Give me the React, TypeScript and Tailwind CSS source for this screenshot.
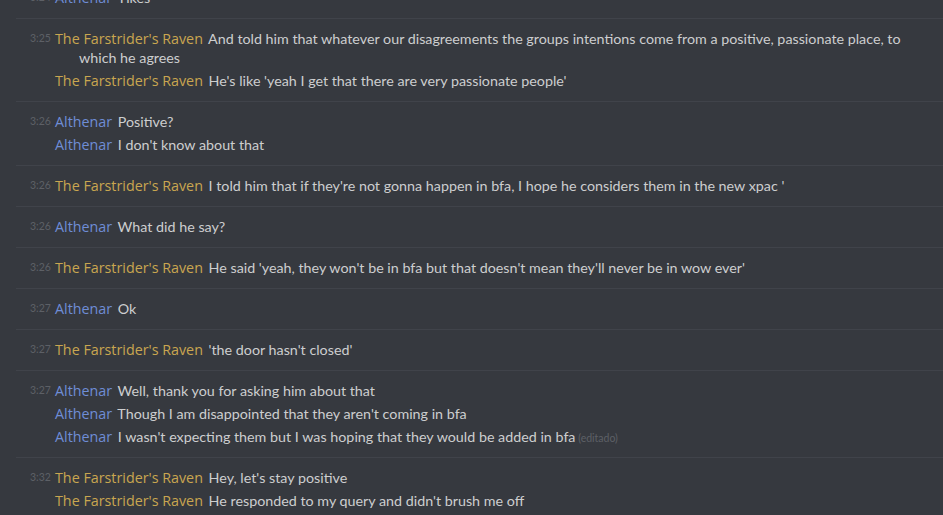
import React from "react";

type Msg = { author: "r" | "a"; text: React.ReactNode; edited?: boolean };
type Group = { time: string; msgs: Msg[] };

const groups: Group[] = [
  { time: "3:24", msgs: [{ author: "a", text: "Yikes" }] },
  {
    time: "3:25",
    msgs: [
      {
        author: "r",
        text: (
          <>
            And told him that whatever our disagreements the groups intentions come from a positive, passionate place, to
            <br />
            which he agrees
          </>
        ),
      },
      { author: "r", text: "He's like 'yeah I get that there are very passionate people'" },
    ],
  },
  {
    time: "3:26",
    msgs: [
      { author: "a", text: "Positive?" },
      { author: "a", text: "I don't know about that" },
    ],
  },
  {
    time: "3:26",
    msgs: [{ author: "r", text: "I told him that if they're not gonna happen in bfa, I hope he considers them in the new xpac '" }],
  },
  { time: "3:26", msgs: [{ author: "a", text: "What did he say?" }] },
  {
    time: "3:26",
    msgs: [{ author: "r", text: "He said 'yeah, they won't be in bfa but that doesn't mean they'll never be in wow ever'" }],
  },
  { time: "3:27", msgs: [{ author: "a", text: "Ok" }] },
  { time: "3:27", msgs: [{ author: "r", text: "'the door hasn't closed'" }] },
  {
    time: "3:27",
    msgs: [
      { author: "a", text: "Well, thank you for asking him about that" },
      { author: "a", text: "Though I am disappointed that they aren't coming in bfa" },
      { author: "a", text: "I wasn't expecting them but I was hoping that they would be added in bfa", edited: true },
    ],
  },
  {
    time: "3:32",
    msgs: [
      { author: "r", text: "Hey, let's stay positive" },
      { author: "r", text: "He responded to my query and didn't brush me off" },
    ],
  },
];

export default function App() {
  return (
    <div
      className="w-[943px] h-[515px] overflow-hidden bg-[#36393f] text-[14.3px]"
      style={{ fontFamily: "Lato, 'Noto Sans', sans-serif" }}
    >
      <div className="-mt-[22px] flex flex-col">
        {groups.map((g, gi) => (
          <div key={gi} className={"ml-[16px] " + (gi === 0 ? "" : "border-t border-[#40434a]")}>
            <div className="pt-[10px] pb-[11px] pl-[14px] flex flex-col gap-[4px]">
              {g.msgs.map((m, mi) => (
                <div key={mi} className="flex leading-[19px]">
                  <div className="w-[25px] shrink-0 text-[10.5px] text-[#5d6066] leading-[19px]">
                    {mi === 0 ? g.time : ""}
                  </div>
                  <div className="pl-[24px] -indent-[24px] text-[#cdcecf]">
                    <span
                      className={
                        "pr-[2px] " + (m.author === "r" ? "text-[#c9a650]" : "text-[#6f8dd6]")
                      }
                      style={{ fontFamily: "'Open Sans', Lato, sans-serif" }}
                    >
                      {m.author === "r" ? "The Farstrider's Raven" : "Althenar"}
                    </span>{" "}
                    {m.text}
                    {m.edited && (
                      <span className="text-[10.5px] leading-none text-[#5d6066]"> (editado)</span>
                    )}
                  </div>
                </div>
              ))}
            </div>
          </div>
        ))}
      </div>
    </div>
  );
}
